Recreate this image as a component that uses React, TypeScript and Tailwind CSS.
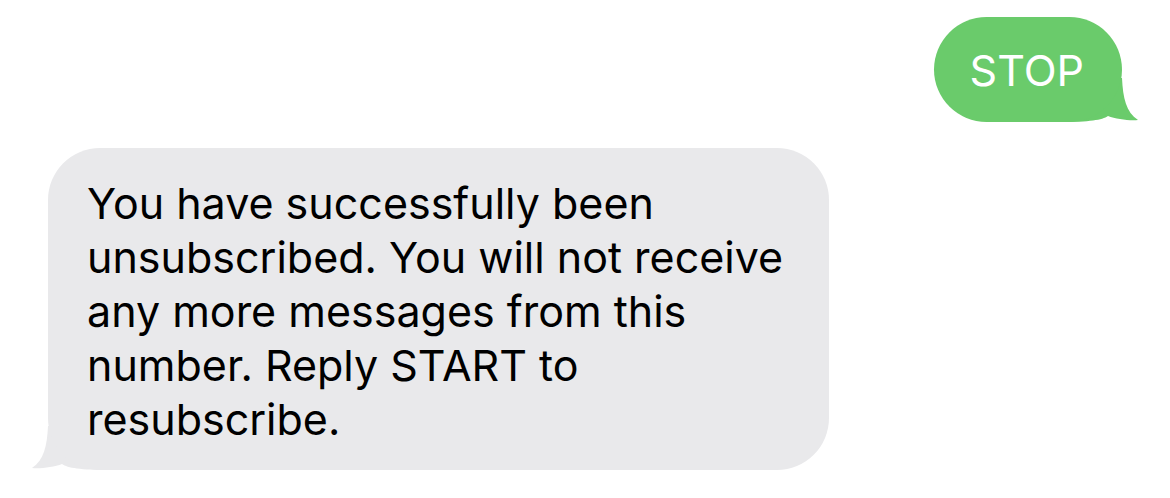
const font = { fontFamily: 'Inter, "Liberation Sans", Arial, sans-serif' }

function Tail({ color, side }: { color: string; side: 'left' | 'right' }) {
    return (
        <svg
            width="82"
            height="54"
            viewBox="0 0 82 54"
            className={
                side === 'right'
                    ? 'absolute -right-[20px] -bottom-[2px]'
                    : 'absolute -left-[20px] -bottom-[2px] -scale-x-100'
            }
            aria-hidden="true"
        >
            <path
                d="M0,8 L62,8 C63,28 66,42 78,50 C70,51 56,49 48,46 C42,50 30,52 0,52 Z"
                fill={color}
            />
        </svg>
    )
}

export default function App() {
    return (
        <div className="w-[1170px] h-[498px] bg-white flex flex-col px-12 pt-[17px]" style={font}>
            {/* Outgoing */}
            <div className="self-end relative">
                <div className="relative z-10 h-[105px] rounded-[53px] bg-[#6acb6b] pl-[36px] pr-[38px] flex items-center text-white text-[43px] leading-[54px]">
                    STOP
                </div>
                <Tail color="#6acb6b" side="right" />
            </div>

            {/* Incoming */}
            <div className="self-start relative mt-[26px]">
                <div className="relative z-10 w-[781px] h-[322px] rounded-[52px] bg-[#e9e9eb] pl-[39px] pt-[28px] text-black text-[43px] leading-[54px]">
                    You have successfully been
                    <br />
                    unsubscribed. You will not receive
                    <br />
                    any more messages from this
                    <br />
                    number. Reply START to
                    <br />
                    resubscribe.
                </div>
                <Tail color="#e9e9eb" side="left" />
            </div>
        </div>
    )
}
